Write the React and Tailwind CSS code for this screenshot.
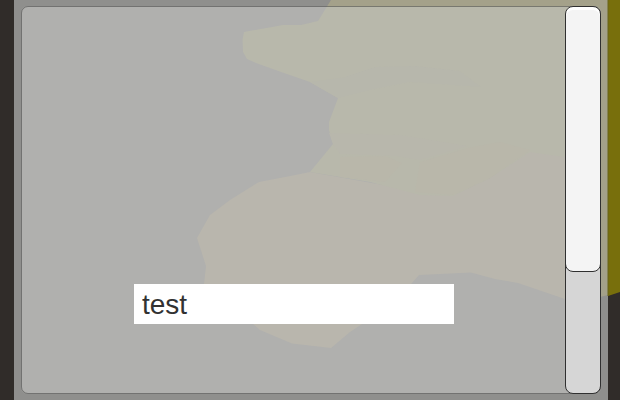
const UPPER =
  "331,0 318,21 301,25 283,25 244,32 242.5,40 243,52 247,59 256,63 284,73 310,82 338,98 329,122 329,130 333,144 310,172 370,182 420,195 453,196 490,178 530,152 565,157 620,160 620,0";
const LOWER =
  "310,172 285,177 259,182 230,200 210,215 197,238 206,266 204,284 230,305 253,324 260,330 292,343.5 331,348 350,332 362,324 411,284 419,275 471,272.5 495,279 518,283 565,299 600,297 620,292 620,150 530,150 490,178 453,194 400,188";

function Backdrop() {
  return (
    <svg className="absolute inset-0" width="620" height="400" viewBox="0 0 620 400" aria-hidden="true">
      <defs>
        <clipPath id="frame"><rect x="14" y="0" width="594" height="400" /></clipPath>
        <clipPath id="view"><rect x="21" y="6" width="580" height="388" rx="7" /></clipPath>
      </defs>
      <rect width="620" height="400" fill="#302c29" />
      <polygon points="608,0 620,0 620,292 608,296" fill="#786f0c" />
      <g clipPath="url(#frame)">
        <rect width="620" height="400" fill="#8f8f8d" />
        <polygon points={UPPER} fill="#a4a18a" />
        <polygon points={LOWER} fill="#a4a18a" />
      </g>
      <g clipPath="url(#view)">
        <rect width="620" height="400" fill="#b0b0ae" />
        <polygon points={LOWER} fill="#b9b6ad" />
        <polygon points={UPPER} fill="#b8b8ab" />
        <polygon points="310,82 345,77 375,67 415,66 460,71 481,87 410,82 370,90 338,98" fill="#b7b7ac" />
        <polygon points="329,133 400,135 468,146 420,160 395,156 340,154 333,144" fill="#b8b7ac" />
        <polygon points="340,157 385,156 402,163 385,182 340,177" fill="#b9b7aa" />
        <polygon points="420,162 468,148 500,142 530,150 490,178 453,195 415,192" fill="#b9b7aa" />
      </g>
      <path d="M608 0V296" stroke="#69641b" strokeWidth="1" />
    </svg>
  );
}

export default function App() {
  return (
    <main className="relative h-[400px] w-[620px] overflow-hidden font-['Liberation_Sans',Arial,sans-serif]">
      <Backdrop />
      <div className="relative h-full pt-[6px] pr-[19px] pb-[6px] pl-[21px]">
        <div className="flex h-full justify-between rounded-[7px] border border-black/35">
          <div className="pt-[277px] pl-[112px]">
            <input
              type="text"
              defaultValue="test"
              aria-label="Text"
              className="block h-[40px] w-[320px] bg-white px-[8px] pt-[2px] text-[28px] leading-[38px] text-[#323232] outline-none"
            />
          </div>
          <div className="-my-px -mr-px w-[36px] shrink-0 overflow-hidden rounded-[8px] border border-[#303030] bg-[#d6d6d6]">
            <div className="-mx-px -mt-px h-[266px] rounded-[8px] border border-[#303030] bg-[#f4f4f4] shadow-[inset_0_3px_0_#ffffff]" />
          </div>
        </div>
      </div>
    </main>
  );
}
